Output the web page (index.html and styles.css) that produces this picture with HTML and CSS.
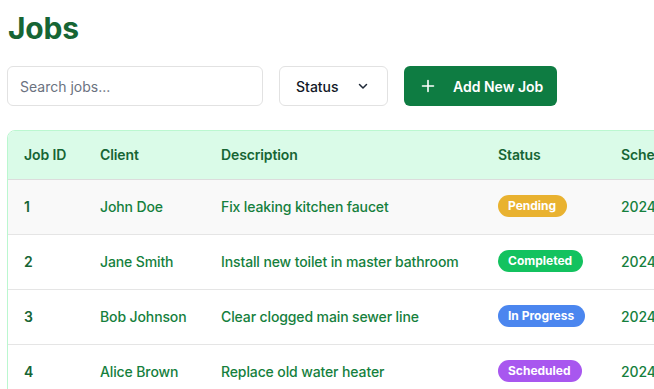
FILE: index.html
```html
<!DOCTYPE html>
<html lang="en">
<head>
<meta charset="utf-8">
<title>Jobs</title>
<link rel="stylesheet" href="styles.css">
</head>
<body>
<main class="page">
  <h1 class="title">Jobs</h1>
  <div class="controls">
    <input class="search" type="text" placeholder="Search jobs...">
    <button class="select" type="button">
      <span>Status</span>
      <svg class="chev" width="12" height="12" viewBox="0 0 12 12" aria-hidden="true"><path d="M2.5 4.5 L6 8 L9.5 4.5" fill="none" stroke="#1f2937" stroke-width="1.5" stroke-linecap="round" stroke-linejoin="round"/></svg>
    </button>
    <button class="add" type="button">
      <svg class="plus" width="14" height="14" viewBox="0 0 14 14" aria-hidden="true"><path d="M7 1.5 V12.5 M1.5 7 H12.5" stroke="#fff" stroke-width="1.6" stroke-linecap="round"/></svg>
      <span>Add New Job</span>
    </button>
  </div>
  <div class="table-wrap">
    <table class="jobs">
      <colgroup>
        <col class="c-id"><col class="c-client"><col class="c-desc"><col class="c-status"><col class="c-date">
      </colgroup>
      <thead>
        <tr><th>Job ID</th><th>Client</th><th>Description</th><th>Status</th><th>Scheduled Date</th></tr>
      </thead>
      <tbody>
        <tr class="hover"><td class="id">1</td><td>John Doe</td><td>Fix leaking kitchen faucet</td><td><span class="badge pending">Pending</span></td><td>2024-06-15</td></tr>
        <tr><td class="id">2</td><td>Jane Smith</td><td>Install new toilet in master bathroom</td><td><span class="badge completed">Completed</span></td><td>2024-06-10</td></tr>
        <tr><td class="id">3</td><td>Bob Johnson</td><td>Clear clogged main sewer line</td><td><span class="badge progress">In Progress</span></td><td>2024-06-12</td></tr>
        <tr><td class="id">4</td><td>Alice Brown</td><td>Replace old water heater</td><td><span class="badge scheduled">Scheduled</span></td><td>2024-06-20</td></tr>
      </tbody>
    </table>
  </div>
</main>
</body>
</html>
```
FILE: styles.css
```css
html, body {
  margin: 0;
  padding: 0;
  background: #ffffff;
  overflow: hidden;
}
body {
  font-family: Inter, "Noto Sans", "Liberation Sans", sans-serif;
  color: #15803d;
}
.page {
  padding: 10px 7px;
  width: 760px;
}
.title {
  margin: 0 0 20px 1px;
  font-size: 30px;
  line-height: 36px;
  font-weight: 700;
  color: #166534;
  letter-spacing: -0.2px;
}
.controls {
  display: flex;
  gap: 16px;
  height: 40px;
  margin-bottom: 24px;
}
.search {
  box-sizing: border-box;
  width: 256px;
  height: 40px;
  border: 1px solid #e2e2e2;
  border-radius: 6px;
  padding: 0 12px;
  font-family: inherit;
  font-size: 14px;
  color: #111827;
  outline: none;
}
.search::placeholder {
  color: #6b7280;
}
.select {
  box-sizing: border-box;
  width: 109px;
  height: 40px;
  border: 1px solid #e2e2e2;
  border-radius: 6px;
  background: #fff;
  display: flex;
  align-items: center;
  justify-content: space-between;
  padding: 0 18px 0 16px;
  font-family: inherit;
  font-size: 14px;
  font-weight: 500;
  color: #111827;
}
.chev { display: block; }
.add {
  box-sizing: border-box;
  width: 153px;
  height: 40px;
  border: none;
  border-radius: 6px;
  background: #0e7c42;
  color: #fff;
  display: flex;
  align-items: center;
  gap: 18px;
  padding: 0 12px 0 17px;
  font-family: inherit;
  font-size: 14px;
  font-weight: 600;
  white-space: nowrap;
}
.plus { display: block; flex: none; }
.table-wrap {
  width: 760px;
  border: 1px solid #bbf7d0;
  border-radius: 8px;
  overflow: hidden;
}
.jobs {
  width: 100%;
  border-collapse: collapse;
  table-layout: fixed;
  font-size: 14px;
  letter-spacing: -0.12px;
}
.c-id { width: 76px; }
.c-client { width: 121px; }
.c-desc { width: 277px; }
.c-status { width: 123px; }
.jobs thead tr {
  background: #dafbe8;
}
.jobs th {
  text-align: left;
  font-weight: 600;
  color: #166534;
  height: 47px;
  padding: 0 16px 1px;
  border-bottom: 1px solid #dcdcdc;
  white-space: nowrap;
}
.jobs td {
  height: 52px;
  padding: 0 16px 2px;
  border-bottom: 1px solid #e5e5e5;
  font-weight: 500;
  color: #15803d;
  white-space: nowrap;
}
.jobs td.id {
  font-weight: 600;
  color: #166534;
}
.jobs tr.hover td {
  background: #f9f9f9;
}
.badge {
  display: inline-block;
  padding: 3px 11px 3px 10px;
  border-radius: 999px;
  font-size: 12px;
  line-height: 16px;
  font-weight: 700;
  color: #fff;
  letter-spacing: 0;
}
.pending { background: #e9b230; }
.completed { background: #13c25f; }
.progress { background: #4b86ef; }
.scheduled { background: #a857ef; }
```
